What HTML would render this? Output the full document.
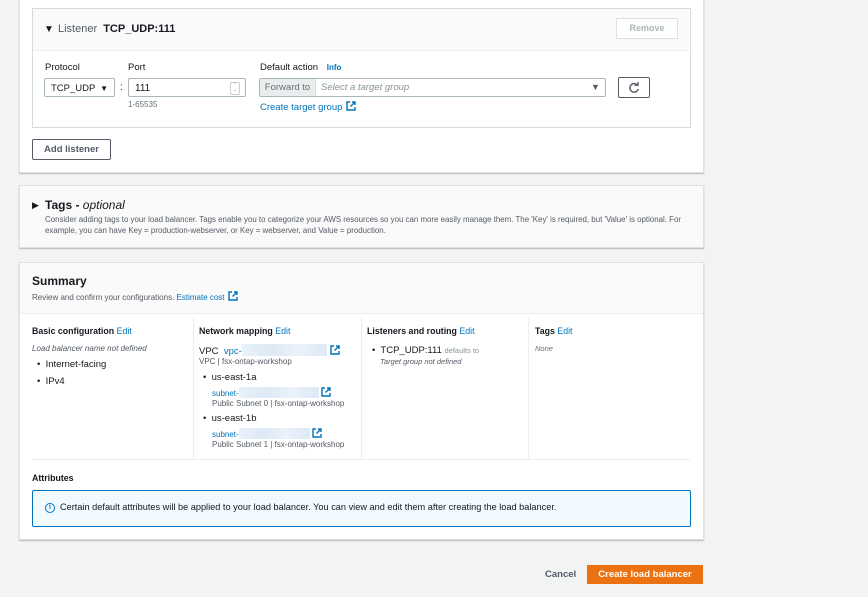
<!DOCTYPE html>
<html><head><style>
body{margin:0;width:868px;height:597px;background:#f2f3f3;font-family:"Liberation Sans",sans-serif;color:#16191f;position:relative;overflow:hidden}
.a{position:absolute}
.card{position:absolute;background:#fff;box-shadow:0 1px 1px rgba(0,0,0,.25);border:1px solid #e0e0e0}
.l{color:#0073bb}
.s{font-size:8px}
.b{font-weight:bold}
.i{font-style:italic}
.ext{display:inline-block;width:10px;height:10px;vertical-align:-1px;margin-left:2px}
.blur{display:inline-block;background:linear-gradient(90deg,#eaf2fa,#dde9f5,#eaf2fa,#dde9f5);height:12px;vertical-align:-2px}
</style></head><body>
<svg width="0" height="0" style="position:absolute"><symbol id="x" viewBox="0 0 10 10"><path d="M4 1H1v8h8V6" fill="none" stroke="#0073bb" stroke-width="1.4"/><path d="M6 1h3v3M9 1L4.5 5.5" fill="none" stroke="#0073bb" stroke-width="1.4"/></symbol></svg>
<!-- main card -->
<div class="card" style="left:19px;top:-2px;width:683px;height:173px"></div>
<div class="a" style="left:32px;top:8px;width:657px;height:118px;border:1px solid #d5dbdb;background:#fff"></div>
<div class="a" style="left:33px;top:9px;width:656px;height:41px;background:#fafafa;border-bottom:1px solid #eaeded"></div>
<div class="a" style="left:44px;top:24px;font-size:10px">▼</div>
<div class="a" style="left:58px;top:23px;font-size:11px;color:#545b64">Listener <b style="color:#16191f;margin-left:3px">TCP_UDP:111</b></div>
<div class="a" style="left:616px;top:18px;width:60px;height:19px;border:1px solid #e0e0e0;background:#fff;color:#aab7b8;font-size:9px;font-weight:bold;text-align:center;line-height:19px">Remove</div>
<div class="a" style="left:45px;top:62px;font-size:9.5px">Protocol</div>
<div class="a" style="left:128px;top:62px;font-size:9.5px">Port</div>
<div class="a" style="left:260px;top:62px;font-size:9.5px">Default action <span class="b l" style="font-size:8px;margin-left:6px">Info</span></div>
<div class="a" style="left:44px;top:78px;width:71px;height:19px;border:1px solid #aab7b8;border-radius:2px;font-size:9.5px;line-height:19px;padding-left:6px;box-sizing:border-box">TCP_UDP<span style="position:absolute;right:6px;font-size:8px">▼</span></div>
<div class="a" style="left:120px;top:82px;font-size:10px">:</div>
<div class="a" style="left:128px;top:78px;width:118px;height:19px;border:1px solid #aab7b8;border-radius:2px;font-size:10px;line-height:19px;padding-left:6px;box-sizing:border-box">111<span style="position:absolute;right:5px;top:3px;width:8px;height:11px;border:1px solid #ccc;border-radius:2px;font-size:5px;line-height:5px;text-align:center;color:#999">⌃<br>⌄</span></div>
<div class="a" style="left:128px;top:100px;font-size:8px;color:#687078">1-65535</div>
<div class="a" style="left:259px;top:78px;width:347px;height:19px;border:1px solid #aab7b8;border-radius:2px;box-sizing:border-box"></div>
<div class="a" style="left:260px;top:79px;width:55px;height:17px;background:#eaeded;border-right:1px solid #d5dbdb;font-size:9.5px;color:#687078;line-height:17px;text-align:center">Forward to</div>
<div class="a i" style="left:321px;top:82px;font-size:9.5px;color:#879596">Select a target group</div>
<div class="a" style="left:591px;top:82px;font-size:9px;color:#545b64">▼</div>
<div class="a" style="left:618px;top:77px;width:30px;height:19px;border:1px solid #545b64;border-radius:2px"><svg class="a" style="left:9px;top:4px" width="12" height="12" viewBox="0 0 12 12"><path d="M9.5 3.2A4.3 4.3 0 1 0 10.3 7" fill="none" stroke="#545b64" stroke-width="1.4"/><path d="M6.5 3.2h3.5V0" fill="none" stroke="#545b64" stroke-width="1.4"/></svg></div>
<div class="a l" style="left:260px;top:101px;font-size:9.5px">Create target group<svg class="ext" style="margin-left:4px"><use href="#x"/></svg></div>
<div class="a b" style="left:32px;top:139px;width:77px;height:19px;border:1px solid #545b64;border-radius:2px;font-size:9.5px;line-height:19px;text-align:center;color:#545b64">Add listener</div>
<!-- tags -->
<div class="card" style="left:19px;top:185px;width:683px;height:61px;background:#fafafa"></div>
<div class="a" style="left:32px;top:200px;font-size:9px">▶</div>
<div class="a b" style="left:45px;top:198px;font-size:12px">Tags - <span class="i" style="font-weight:normal">optional</span></div>
<div class="a" style="left:45px;top:214px;font-size:7.9px;color:#545b64;line-height:11px;width:640px">Consider adding tags to your load balancer. Tags enable you to categorize your AWS resources so you can more easily manage them. The 'Key' is required, but 'Value' is optional. For example, you can have Key = production-webserver, or Key = webserver, and Value = production.</div>
<!-- summary -->
<div class="card" style="left:19px;top:262px;width:683px;height:276px"></div>
<div class="a" style="left:20px;top:263px;width:683px;height:50px;background:#fafafa;border-bottom:1px solid #eaeded"></div>
<div class="a b" style="left:32px;top:274px;font-size:12px">Summary</div>
<div class="a" style="left:32px;top:291px;font-size:8px;color:#545b64">Review and confirm your configurations. <span class="l">Estimate cost</span><svg class="ext" style="margin-left:3px"><use href="#x"/></svg></div>
<div class="a" style="left:193px;top:318px;width:1px;height:140px;background:#eaeded"></div>
<div class="a" style="left:361px;top:318px;width:1px;height:140px;background:#eaeded"></div>
<div class="a" style="left:528px;top:318px;width:1px;height:140px;background:#eaeded"></div>
<div class="a" style="left:32px;top:459px;width:658px;height:1px;background:#eaeded"></div>
<div class="a" style="left:32px;top:326px;font-size:8.8px"><b>Basic configuration</b> <span class="l">Edit</span></div>
<div class="a i s" style="left:32px;top:344px;color:#545b64">Load balancer name not defined</div>
<div class="a" style="left:37px;top:359px;font-size:9.5px">•&nbsp; Internet-facing</div>
<div class="a" style="left:37px;top:376px;font-size:9.5px">•&nbsp; IPv4</div>
<div class="a" style="left:199px;top:326px;font-size:8.8px"><b>Network mapping</b> <span class="l">Edit</span></div>
<div class="a" style="left:199px;top:344px;font-size:9.5px">VPC&nbsp; <span class="l">vpc-</span><span class="blur" style="width:85px"></span><svg class="ext" style="margin-left:3px"><use href="#x"/></svg></div>
<div class="a s" style="left:199px;top:357px;color:#545b64">VPC | fsx-ontap-workshop</div>
<div class="a" style="left:203px;top:372px;font-size:9.5px">•&nbsp; us-east-1a</div>
<div class="a s l" style="left:212px;top:387px">subnet-<span class="blur" style="width:80px;height:11px"></span><svg class="ext"><use href="#x"/></svg></div>
<div class="a s" style="left:212px;top:399px;color:#545b64">Public Subnet 0 | fsx-ontap-workshop</div>
<div class="a" style="left:203px;top:413px;font-size:9.5px">•&nbsp; us-east-1b</div>
<div class="a s l" style="left:212px;top:428px">subnet-<span class="blur" style="width:71px;height:11px"></span><svg class="ext"><use href="#x"/></svg></div>
<div class="a s" style="left:212px;top:440px;color:#545b64">Public Subnet 1 | fsx-ontap-workshop</div>
<div class="a" style="left:367px;top:326px;font-size:8.8px"><b>Listeners and routing</b> <span class="l">Edit</span></div>
<div class="a" style="left:372px;top:345px;font-size:9.5px">•&nbsp; TCP_UDP:111 <span style="font-size:7.5px;color:#879596">defaults to</span></div>
<div class="a i" style="left:380px;top:357px;font-size:7.5px;color:#545b64">Target group not defined</div>
<div class="a" style="left:535px;top:326px;font-size:8.8px"><b>Tags</b> <span class="l">Edit</span></div>
<div class="a i" style="left:535px;top:344px;font-size:7.5px;color:#687078">None</div>
<div class="a b" style="left:32px;top:473px;font-size:8.8px">Attributes</div>
<div class="a" style="left:32px;top:490px;width:657px;height:35px;border:1px solid #0073bb;background:#f1faff;border-radius:2px"></div>
<div class="a" style="left:45px;top:503px;width:8px;height:8px;border:1.3px solid #0073bb;border-radius:50%;font-size:7px;line-height:8px;text-align:center;color:#0073bb;font-weight:bold">i</div>
<div class="a" style="left:60px;top:502px;font-size:9.2px">Certain default attributes will be applied to your load balancer. You can view and edit them after creating the load balancer.</div>
<!-- footer -->
<div class="a b" style="left:545px;top:569px;font-size:9.5px;color:#545b64">Cancel</div>
<div class="a b" style="left:587px;top:565px;width:116px;height:19px;background:#ec7211;color:#fff;font-size:9.5px;line-height:19px;text-align:center">Create load balancer</div>
</body></html>
